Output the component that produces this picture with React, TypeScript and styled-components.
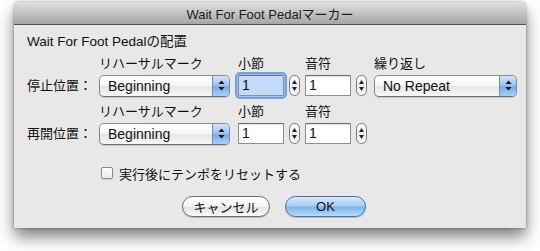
import React, { FC } from "react"
import styled, { createGlobalStyle } from "styled-components"

const FONT = `"Liberation Sans", "Noto Sans CJK JP", sans-serif`

const GlobalStyle = createGlobalStyle`
  html, body {
    margin: 0;
    padding: 0;
    background: #ffffff;
  }
  body {
    font-family: ${FONT};
    font-size: 13px;
    color: #111;
  }
`

const Page = styled.div`
  width: 540px;
  height: 251px;
  padding: 2px 0 0 14px;
  box-sizing: border-box;
`

const Window = styled.div`
  width: 512px;
  height: 226px;
  background: #e8e8e8;
  border-radius: 5px 5px 0 0;
  box-shadow: 0 9px 16px rgba(0, 0, 0, 0.5), 0 0 3px rgba(0, 0, 0, 0.35);
  display: flex;
  flex-direction: column;
  overflow: hidden;
`

const TitleBar = styled.div`
  height: 21px;
  flex: none;
  display: flex;
  align-items: center;
  justify-content: center;
  background: linear-gradient(#e0e0e0, #c3c3c3 50%, #a6a6a6);
  border-bottom: 1px solid #515151;
  font-size: 13px;
  color: #1c1c1c;
  padding-top: 1px;
`

const Body = styled.div`
  padding: 9px 0 0 13px;
  display: flex;
  flex-direction: column;
`

const Heading = styled.div`
  line-height: 16px;
  height: 16px;
  font-size: 13.5px;
`

const Group = styled.div<{ $top: number }>`
  display: flex;
  align-items: flex-end;
  margin-top: ${(p) => p.$top}px;
`

const RowLabel = styled.div`
  width: 72px;
  flex: none;
  height: 23px;
  line-height: 23px;
`

const Column = styled.div<{ $left: number }>`
  display: flex;
  flex-direction: column;
  margin-left: ${(p) => p.$left}px;
`

const Caption = styled.div`
  height: 16px;
  line-height: 16px;
  margin-bottom: 2px;
  white-space: nowrap;
`

const Controls = styled.div`
  display: flex;
  align-items: center;
  height: 23px;
  gap: 5px;
`

const Popup = styled.div<{ $width: number }>`
  width: ${(p) => p.$width}px;
  height: 22px;
  box-sizing: border-box;
  border: 1px solid #8b8b8b;
  border-bottom-color: #6e6e6e;
  border-radius: 5px;
  background: linear-gradient(#ffffff, #f6f6f6 50%, #e6e6e6 51%, #f7f7f7);
  display: flex;
  overflow: hidden;
  box-shadow: 0 1px 1px rgba(0, 0, 0, 0.15);
`

const PopupText = styled.div`
  flex: 1;
  font-size: 14px;
  line-height: 20px;
  padding-left: 8px;
`

const PopupArrows = styled.div`
  width: 16px;
  flex: none;
  background: linear-gradient(#cfe3fb, #9fc6f3 45%, #76abea 55%, #a6d0fb);
  border-left: 1px solid #6d8fbd;
  display: flex;
  align-items: center;
  justify-content: center;
`

const Field = styled.div<{ $focused?: boolean }>`
  width: 46px;
  height: 21px;
  box-sizing: border-box;
  border: 1px solid #8e8e8e;
  border-top-color: #6f6f6f;
  background: ${(p) => (p.$focused ? "#c3dbfa" : "#ffffff")};
  box-shadow: ${(p) =>
    p.$focused
      ? "0 0 0 1px #9ac0ee, 0 0 0 3px #6fa3e3"
      : "inset 0 1px 1px rgba(0,0,0,0.12)"};
  border-radius: ${(p) => (p.$focused ? "2px" : "0")};
  font-size: 14px;
  line-height: 16px;
  padding: 1px 0 0 3px;
`

const Stepper = styled.div`
  width: 11px;
  height: 21px;
  box-sizing: border-box;
  border: 1px solid #7a7a7a;
  border-radius: 6px;
  background: linear-gradient(#ffffff, #ececec 50%, #f8f8f8);
  display: flex;
  flex-direction: column;
  align-items: center;
  justify-content: space-between;
  padding: 4px 0;
`

const CheckRow = styled.label`
  display: flex;
  align-items: center;
  gap: 6px;
  margin: 21px 0 0 74px;
  height: 14px;
`

const CheckBox = styled.span`
  width: 12px;
  height: 12px;
  box-sizing: border-box;
  border: 1px solid #8a8a8a;
  border-radius: 2px;
  background: linear-gradient(#fdfdfd, #ececec);
  box-shadow: 0 1px 1px rgba(0, 0, 0, 0.12);
`

const ButtonRow = styled.div`
  display: flex;
  gap: 15px;
  margin: 16px 0 0 155px;
`

const PushButton = styled.div<{ $default?: boolean; $width: number }>`
  width: ${(p) => p.$width}px;
  height: 21px;
  box-sizing: border-box;
  border-radius: 11px;
  border: 1px solid ${(p) => (p.$default ? "#4d6c99" : "#6b6b6b")};
  background: ${(p) =>
    p.$default
      ? "linear-gradient(#d9eafc, #a9cdf5 45%, #7db4ee 55%, #b5dcfd)"
      : "linear-gradient(#ffffff, #f3f3f3 50%, #e4e4e4 55%, #fafafa)"};
  box-shadow: 0 1px 1px rgba(0, 0, 0, 0.2);
  display: flex;
  align-items: center;
  justify-content: center;
  font-size: 13px;
  color: #111;
`

const UpDown: FC = () => (
  <svg width="7" height="11" viewBox="0 0 7 11">
    <path d="M3.5 0.5 L6.5 4 L0.5 4 Z" fill="#111" />
    <path d="M3.5 10.5 L6.5 7 L0.5 7 Z" fill="#111" />
  </svg>
)

const Tri: FC<{ down?: boolean }> = ({ down }) => (
  <svg width="5" height="4" viewBox="0 0 5 4">
    <path d={down ? "M0 0 L5 0 L2.5 4 Z" : "M2.5 0 L5 4 L0 4 Z"} fill="#222" />
  </svg>
)

const PopupButton: FC<{ width: number; label: string }> = ({ width, label }) => (
  <Popup $width={width}>
    <PopupText>{label}</PopupText>
    <PopupArrows>
      <UpDown />
    </PopupArrows>
  </Popup>
)

const StepperControl: FC = () => (
  <Stepper>
    <Tri />
    <Tri down />
  </Stepper>
)

interface PositionRowProps {
  label: string
  top: number
  focused?: boolean
  repeat?: boolean
}

const PositionRow: FC<PositionRowProps> = ({ label, top, focused, repeat }) => (
  <Group $top={top}>
    <RowLabel>{label}</RowLabel>
    <Column $left={0}>
      <Caption>リハーサルマーク</Caption>
      <Controls>
        <PopupButton width={131} label="Beginning" />
      </Controls>
    </Column>
    <Column $left={8}>
      <Caption>小節</Caption>
      <Controls>
        <Field $focused={focused}>1</Field>
        <StepperControl />
      </Controls>
    </Column>
    <Column $left={5}>
      <Caption>音符</Caption>
      <Controls>
        <Field>1</Field>
        <StepperControl />
      </Controls>
    </Column>
    {repeat && (
      <Column $left={7}>
        <Caption>繰り返し</Caption>
        <Controls>
          <PopupButton width={143} label="No Repeat" />
        </Controls>
      </Column>
    )}
  </Group>
)

const App: FC = () => (
  <Page>
    <GlobalStyle />
    <Window>
      <TitleBar>Wait For Foot Pedalマーカー</TitleBar>
      <Body>
        <Heading>Wait For Foot Pedalの配置</Heading>
        <PositionRow label="停止位置：" top={6} focused repeat />
        <PositionRow label="再開位置：" top={7} />
        <CheckRow>
          <CheckBox />
          実行後にテンポをリセットする
        </CheckRow>
        <ButtonRow>
          <PushButton $width={88}>キャンセル</PushButton>
          <PushButton $width={81} $default>
            OK
          </PushButton>
        </ButtonRow>
      </Body>
    </Window>
  </Page>
)

export default App
